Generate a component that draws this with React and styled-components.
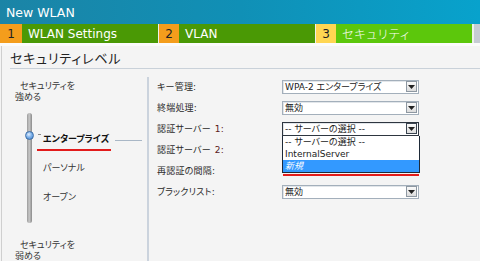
import React from "react";
import styled, { createGlobalStyle } from "styled-components";

const GlobalStyle = createGlobalStyle`
  html, body {
    margin: 0;
    padding: 0;
    background: #f4f4f4;
    overflow: hidden;
  }
  * {
    box-sizing: border-box;
  }
`;

const Window = styled.div`
  width: 480px;
  height: 261px;
  display: flex;
  flex-direction: column;
  font-family: "DejaVu Sans", "Noto Sans CJK JP", sans-serif;
  font-feature-settings: "palt";
  color: #2a2a2a;
  overflow: hidden;
`;

const Header = styled.div`
  height: 24px;
  flex: none;
  display: flex;
  align-items: center;
  padding-left: 6px;
  background: linear-gradient(90deg, #1b84a6 0%, #1090b6 50%, #08a2cc 100%);
  color: #fff;
  font-size: 12.5px;
`;

const Tabs = styled.div`
  height: 22px;
  flex: none;
  display: flex;
  gap: 1px;
  background: #eef1ea;
  border-bottom: 3px solid #fbfbfb;
`;

const Tab = styled.div`
  display: flex;
  width: ${(p) => p.$width}px;
  flex: none;
`;

const TabNum = styled.div`
  width: ${(p) => p.$width}px;
  flex: none;
  display: flex;
  align-items: center;
  justify-content: center;
  background: ${(p) => p.$bg};
  color: #222;
  font-size: 12px;
`;

const TabLabel = styled.div`
  flex: 1;
  display: flex;
  align-items: center;
  padding-left: 6px;
  background: ${(p) => p.$bg};
  color: #fff;
  font-size: 12px;
  font-weight: ${(p) => (p.$jp ? 300 : 400)};
  letter-spacing: ${(p) => (p.$jp ? "1px" : "0")};
`;

const TabRest = styled.div`
  flex: 1;
  margin-left: 1px;
  background: #c6ccd4;
`;

const Body = styled.div`
  flex: 1;
  display: flex;
  flex-direction: column;
  margin-left: 1px;
  border-left: 1px solid #cfcfcf;
`;

const SectionTitle = styled.div`
  margin-left: 8px;
  height: 23px;
  padding-top: 3px;
  line-height: 19px;
  font-size: 13px;
  letter-spacing: 0.8px;
  color: #222;
  border-bottom: 1px solid #c9d1d9;
`;

const Content = styled.div`
  flex: 1;
  display: flex;
`;

const LevelPanel = styled.div`
  width: 145px;
  flex: none;
  display: flex;
  flex-direction: column;
  padding-top: 12px;
`;

const Caption = styled.div`
  display: flex;
  flex-direction: column;
  font-size: 9px;
  line-height: 10.5px;
  padding-left: 13px;
  color: #333;
`;

const CaptionLine = styled.span`
  padding-left: ${(p) => (p.$indent ? 5 : 0)}px;
  white-space: nowrap;
`;

const SliderArea = styled.div`
  height: 138px;
  display: flex;
`;

const Track = styled.div`
  position: relative;
  margin-left: 25px;
  margin-top: 11px;
  width: 5px;
  height: 110px;
  border-radius: 3px;
  background: linear-gradient(90deg, #9a9a9a 0%, #c8c8c8 45%, #8a8a8a 100%);
`;

const Knob = styled.div`
  position: absolute;
  left: -2px;
  top: 18px;
  width: 9px;
  height: 9px;
  border-radius: 50%;
  border: 1px solid #3c6ea8;
  background: radial-gradient(circle at 40% 35%, #e4f0ff 0%, #7fb2ea 45%, #3f7fcc 100%);
`;

const Levels = styled.div`
  margin-left: 11px;
  padding-top: 22px;
  display: flex;
  flex-direction: column;
`;

const Level = styled.div`
  position: relative;
  height: 29px;
  display: flex;
  align-items: center;
  font-size: 9px;
  font-weight: ${(p) => (p.$active ? 700 : 400)};
  color: ${(p) => (p.$active ? "#111" : "#333")};

  ${(p) =>
    p.$active &&
    `
    &::before {
      content: "";
      position: absolute;
      left: -5px;
      top: 10px;
      width: 3px;
      height: 1px;
      background: #8a8a8a;
    }
    &::after {
      content: "";
      position: absolute;
      left: -6px;
      bottom: 2px;
      width: 74px;
      height: 2px;
      background: #e21b1b;
    }
  `}
`;

const Connector = styled.span`
  width: 27px;
  height: 1px;
  margin-left: 6px;
  margin-top: 3px;
  background: #a9b7c6;
`;

const Divider = styled.div`
  width: 2px;
  flex: none;
  margin-top: 8px;
  background: #cbd3dd;
`;

const Form = styled.div`
  flex: 1;
  padding-top: 7px;
  padding-left: 8px;
  display: flex;
  flex-direction: column;
`;

const Row = styled.div`
  height: 21px;
  display: flex;
  align-items: ${(p) => (p.$top ? "flex-start" : "center")};
`;

const Label = styled.div`
  width: 125px;
  flex: none;
  align-self: stretch;
  display: flex;
  align-items: center;
  font-size: 9px;
  color: #2a2a2a;
  letter-spacing: 0.2px;
`;

const Num = styled.span`
  margin-left: 4px;
  color: #5a2020;
`;

const SelectBox = styled.div`
  position: relative;
  width: 137px;
  height: 14px;
  display: flex;
  align-items: center;
  background: #fff;
  border: 1px solid ${(p) => (p.$focused ? "#2e3640" : "#a3afbb")};
  box-shadow: inset 1px 1px 0 #e2e6ea;
  font-size: 9px;
  color: #222;
  z-index: ${(p) => (p.$focused ? 3 : 1)};
`;

const SelectText = styled.span`
  flex: 1;
  padding-left: 2px;
  white-space: nowrap;
  overflow: hidden;
`;

const ArrowButton = styled.span`
  width: 11px;
  height: 11px;
  margin-right: 1px;
  display: flex;
  align-items: center;
  justify-content: center;
  border: 1px solid ${(p) => (p.$focused ? "#3a4450" : "#8e98a2")};
  background: linear-gradient(180deg, #fafafa 0%, #dcdcdc 100%);
`;

const DropList = styled.div`
  position: absolute;
  left: -1px;
  top: 13px;
  width: 138px;
  border: 1px solid #1e2a38;
  border-top: none;
  background: #fff;
  font-size: 9px;
`;

const Option = styled.div`
  height: 12px;
  line-height: 12px;
  padding-left: 2px;
  white-space: nowrap;
  background: ${(p) => (p.$selected ? "#3399ff" : "#fff")};
  color: ${(p) => (p.$selected ? "#fff" : "#222")};
  font-style: ${(p) => (p.$selected ? "italic" : "normal")};
`;

const IntervalGroup = styled.div`
  display: flex;
  flex-direction: column;
`;

const InputRow = styled.div`
  display: flex;
  gap: 7px;
  margin-left: 1px;
`;

const Input = styled.div`
  width: ${(p) => p.$width}px;
  height: 13px;
  background: #fff;
  border: 1px solid #a3afbb;
  display: flex;
  justify-content: flex-end;
`;

const Spin = styled.span`
  width: 10px;
  border-left: 1px solid #8e98a2;
`;

const RedLine = styled.div`
  width: 136px;
  height: 2px;
  margin-top: 1px;
  margin-left: 1px;
  background: #e21b1b;
`;

const Arrow = ({ focused }) => (
  <ArrowButton $focused={focused}>
    <svg width="7" height="4" viewBox="0 0 7 4">
      <path d="M0 0 H7 L3.5 4 Z" fill="#222" />
    </svg>
  </ArrowButton>
);

const Select = ({ value, focused, children }) => (
  <SelectBox $focused={focused}>
    <SelectText>{value}</SelectText>
    <Arrow focused={focused} />
    {children}
  </SelectBox>
);

const levels = [
  { name: "エンタープライズ", active: true },
  { name: "パーソナル" },
  { name: "オープン" },
];

export default function App() {
  return (
    <Window>
      <GlobalStyle />
      <Header>New WLAN</Header>
      <Tabs>
        <Tab $width={158}>
          <TabNum $width={22} $bg="#f49d1c">1</TabNum>
          <TabLabel $bg="#4a9905">WLAN Settings</TabLabel>
        </Tab>
        <Tab $width={156}>
          <TabNum $width={20} $bg="#f49d1c">2</TabNum>
          <TabLabel $bg="#4a9905">VLAN</TabLabel>
        </Tab>
        <Tab $width={156}>
          <TabNum $width={20} $bg="#ffd652">3</TabNum>
          <TabLabel $bg="#5cc70c" $jp>
            セキュリティ
          </TabLabel>
        </Tab>
        <TabRest />
      </Tabs>
      <Body>
        <SectionTitle>セキュリティレベル</SectionTitle>
        <Content>
          <LevelPanel>
            <Caption>
              <CaptionLine $indent>セキュリティを</CaptionLine>
              <CaptionLine>強める</CaptionLine>
            </Caption>
            <SliderArea>
              <Track>
                <Knob />
              </Track>
              <Levels>
                {levels.map((l) => (
                  <Level key={l.name} $active={l.active}>
                    {l.name}
                    {l.active && <Connector />}
                  </Level>
                ))}
              </Levels>
            </SliderArea>
            <Caption>
              <CaptionLine $indent>セキュリティを</CaptionLine>
              <CaptionLine>弱める</CaptionLine>
            </Caption>
          </LevelPanel>
          <Divider />
          <Form>
            <Row>
              <Label>キー管理:</Label>
              <Select value="WPA-2 エンタープライズ" />
            </Row>
            <Row>
              <Label>終端処理:</Label>
              <Select value="無効" />
            </Row>
            <Row>
              <Label>
                認証サーバー<Num>1:</Num>
              </Label>
              <Select value="-- サーバーの選択 --" focused>
                <DropList>
                  <Option>-- サーバーの選択 --</Option>
                  <Option>InternalServer</Option>
                  <Option $selected>新規</Option>
                </DropList>
              </Select>
            </Row>
            <Row>
              <Label>
                認証サーバー<Num>2:</Num>
              </Label>
            </Row>
            <Row $top>
              <Label>再認証の間隔:</Label>
              <IntervalGroup>
                <InputRow>
                  <Input $width={32} />
                  <Input $width={53}>
                    <Spin />
                  </Input>
                </InputRow>
                <RedLine />
              </IntervalGroup>
            </Row>
            <Row>
              <Label>ブラックリスト:</Label>
              <Select value="無効" />
            </Row>
          </Form>
        </Content>
      </Body>
    </Window>
  );
}
